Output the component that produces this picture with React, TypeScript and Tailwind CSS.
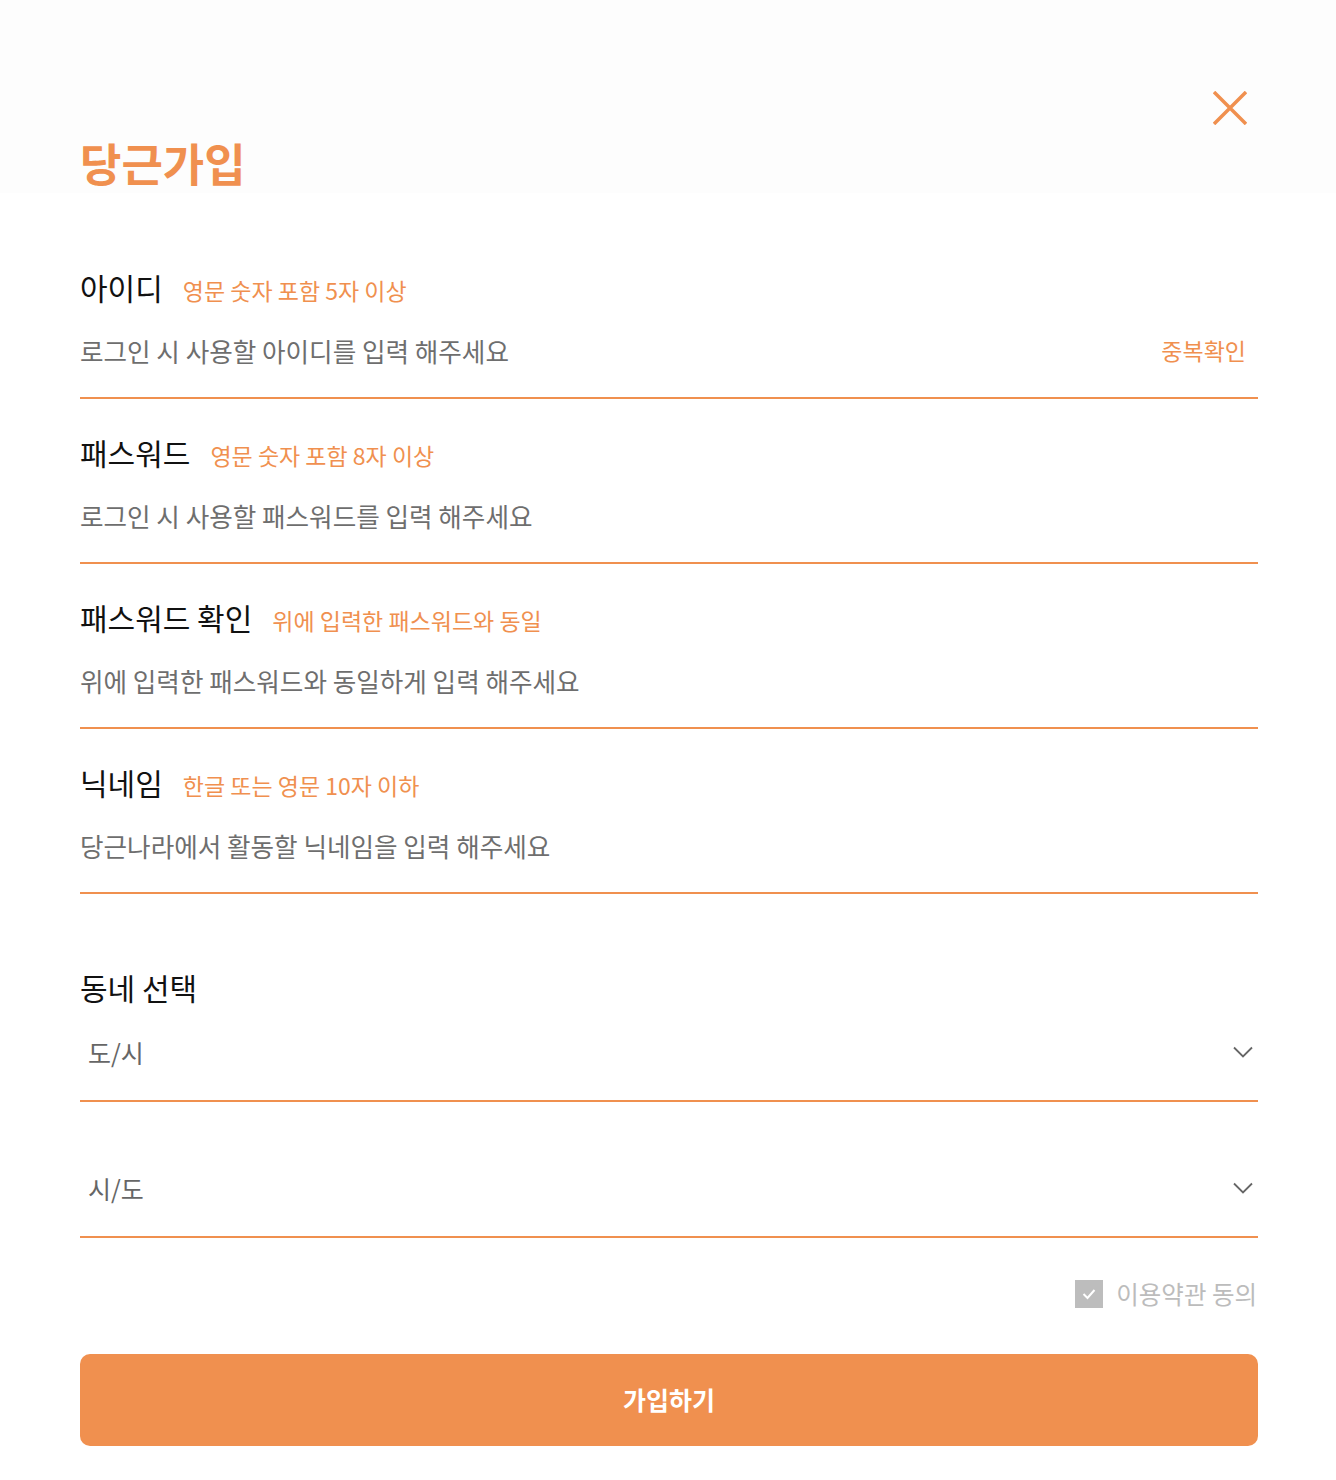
import { useState } from "react";

const fields = [
  { label: "아이디", hint: "영문 숫자 포함 5자 이상", placeholder: "로그인 시 사용할 아이디를 입력 해주세요", type: "text", check: true },
  { label: "패스워드", hint: "영문 숫자 포함 8자 이상", placeholder: "로그인 시 사용할 패스워드를 입력 해주세요", type: "password" },
  { label: "패스워드 확인", hint: "위에 입력한 패스워드와 동일", placeholder: "위에 입력한 패스워드와 동일하게 입력 해주세요", type: "password" },
  { label: "닉네임", hint: "한글 또는 영문 10자 이하", placeholder: "당근나라에서 활동할 닉네임을 입력 해주세요", type: "text" },
];

function Chevron() {
  return (
    <svg width="20" height="12" viewBox="0 0 20 12" fill="none" stroke="#666" strokeWidth="1.8">
      <path d="M1 1.5l9 9 9-9" />
    </svg>
  );
}

function SelectRow({ text, className }: { text: string; className?: string }) {
  return (
    <div className={"border-b-2 border-[#f0904f] pb-[18px] " + (className ?? "")}>
      <div className="flex h-[60px] items-center justify-between">
        <span className="pl-[8px] text-[25px] leading-[60px] text-[#666]">{text}</span>
        <span className="pr-[5px]">
          <Chevron />
        </span>
      </div>
    </div>
  );
}

export default function App() {
  const [agree, setAgree] = useState(true);

  return (
    <div className="min-h-[1480px] w-[1336px] bg-white font-['Noto_Sans_CJK_KR','Noto_Sans',sans-serif]">
      {/* Header */}
      <div className="h-[193px] bg-[#fdfdfd] pl-[80px] pr-[78px] pt-[88px]">
        <div className="flex justify-end">
          <button aria-label="닫기" className="mr-[8px] flex h-[40px] w-[40px] items-center justify-center">
            <svg width="34" height="34" viewBox="0 0 34 34" fill="none" stroke="#f0904f" strokeWidth="3.5">
              <path d="M1 1l32 32M33 1L1 33" />
            </svg>
          </button>
        </div>
        <h1 className="mt-[13px] text-[45px] font-bold leading-[44px] text-[#f0904f]">당근가입</h1>
      </div>

      <div className="mt-[41px] pl-[80px] pr-[78px]">
        {fields.map((f) => (
          <div key={f.label} className="border-b-2 border-[#f0904f] pt-[39px]">
            <div className="flex h-[28px] items-baseline gap-[20px] leading-[28px]">
              <span className="text-[30px] text-[#111]">{f.label}</span>
              <span className="text-[23px] text-[#f0904f]">{f.hint}</span>
            </div>
            <div className="mb-[17px] mt-[19px] flex h-[60px] items-center">
              <input
                type={f.type}
                placeholder={f.placeholder}
                className="h-full flex-1 bg-transparent text-[25.6px] text-[#333] outline-none placeholder:text-[#6e6e6e]"
              />
              {f.check && (
                <button className="mr-[12px] text-[23px] text-[#f0904f]">중복확인</button>
              )}
            </div>
          </div>
        ))}

        <div className="mt-[79px] h-[28px] text-[30px] leading-[28px] text-[#111]">동네 선택</div>
        <SelectRow text="도/시" className="mt-[21px]" />
        <SelectRow text="시/도" className="mt-[56px]" />

        <div className="mt-[42px] flex h-[28px] items-center justify-end gap-[13px]">
          <button
            onClick={() => setAgree(!agree)}
            className="flex h-[28px] w-[28px] items-center justify-center bg-[#bdbdbd]"
          >
            {agree && (
              <svg width="14" height="12" viewBox="0 0 14 12" fill="none" stroke="white" strokeWidth="2">
                <path d="M1.5 6l4 4 7-8" />
              </svg>
            )}
          </button>
          <span className="mr-[1px] text-[24.5px] leading-[28px] text-[#bcbcbc]">이용약관 동의</span>
        </div>

        <button className="mt-[46px] h-[92px] w-full rounded-[10px] bg-[#f0904f] text-[25px] font-bold text-white">
          가입하기
        </button>
      </div>
    </div>
  );
}
